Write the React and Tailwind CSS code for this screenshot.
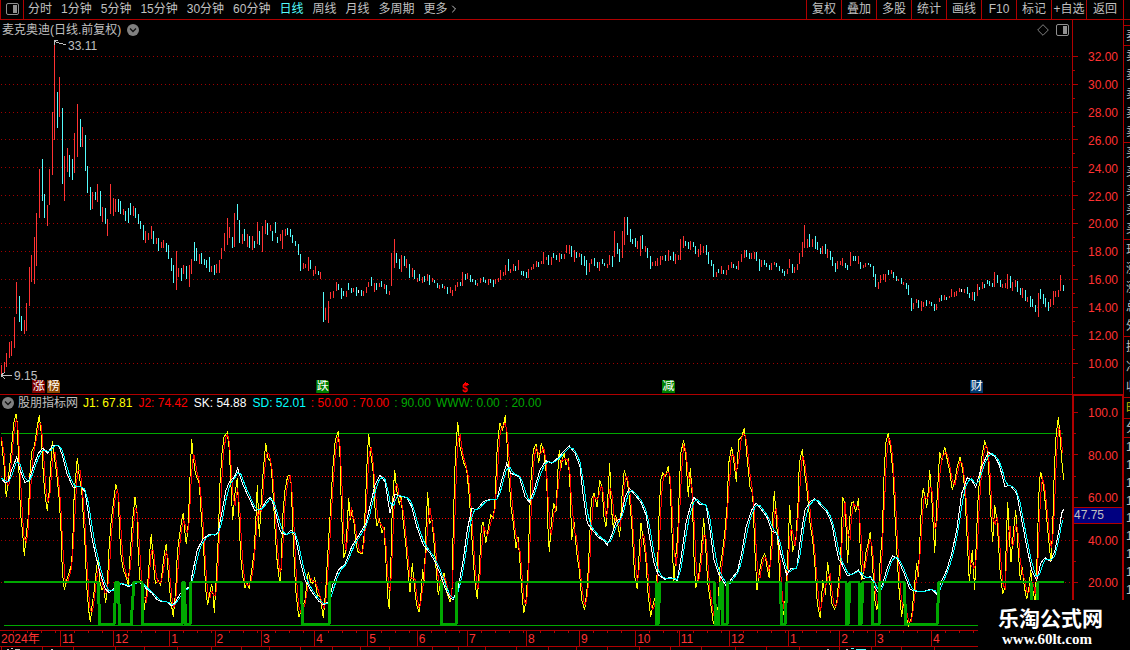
import { LuChevronRight } from "react-icons/lu";

const PERIODS = ["分时", "1分钟", "5分钟", "15分钟", "30分钟", "60分钟", "日线", "周线", "月线", "多周期", "更多"];
const TOOLS = ["复权", "叠加", "多股", "统计", "画线", "F10", "标记", "+自选"];

const PRICES = [32, 30, 28, 26, 24, 22, 20, 18, 16, 14, 12, 10];
const PRICE_LINES = [56, 84, 112, 139, 167, 195, 223, 251, 279, 307, 335, 363];
const LEVELS = ["100.0", "80.00", "60.00", "40.00", "20.00"];

// x, high, low
const UP = `1 365 375,4 362 373,6 353 367,9 342 358,11 341 356,14 317 348,16 282 314,24 320 334,26 303 331,29 267 306,31 255 282,34 237 284,36 213 266,39 169 218,47 205 226,49 169 205,52 112 175,54 42 140,59 77 117,64 156 201,67 148 172,74 133 173,77 104 157,82 127 147,92 192 209,97 184 202,102 207 222,107 219 236,110 184 214,113 198 216,115 199 212,123 209 215,133 206 216,145 231 243,148 233 240,151 226 239,156 238 244,161 242 248,163 240 248,176 251 290,178 268 277,183 265 274,189 265 287,191 259 274,199 254 264,211 266 272,216 264 273,219 260 273,221 248 259,224 233 251,227 218 245,229 227 238,234 213 247,242 234 244,247 234 247,252 236 250,257 222 244,262 226 252,265 220 234,270 225 231,280 234 241,282 230 249,285 229 236,303 263 269,305 264 268,308 257 271,313 270 276,315 266 274,320 272 279,325 308 320,328 301 323,330 292 299,333 291 298,336 282 291,346 291 297,353 288 292,363 291 296,366 287 293,368 282 287,374 283 292,379 283 287,384 284 289,389 291 295,391 253 286,394 239 268,401 255 272,406 259 268,412 268 277,417 278 282,422 277 283,427 274 281,432 278 282,439 285 289,444 286 289,450 287 293,452 290 296,455 285 291,457 282 287,462 272 286,467 273 279,477 283 286,480 278 283,488 279 285,495 279 284,498 278 282,500 270 280,503 272 276,505 265 275,510 269 273,513 264 271,518 260 270,528 269 278,531 267 270,533 264 269,536 261 267,541 261 264,543 252 264,546 257 260,551 257 265,559 253 262,564 254 259,566 245 253,569 245 254,574 250 262,579 253 257,589 263 272,591 259 264,599 262 271,607 264 268,609 255 265,614 231 257,622 231 258,624 217 245,637 241 249,640 236 256,645 246 252,652 262 266,655 261 266,657 258 266,660 256 265,662 256 260,668 250 261,675 254 264,678 255 260,680 239 260,683 236 248,690 241 250,698 249 257,700 244 255,703 246 253,716 272 277,721 266 274,726 270 275,728 265 270,731 262 268,738 261 270,741 254 262,744 250 258,751 253 259,754 252 259,761 260 267,771 263 270,774 262 265,787 269 274,789 259 268,794 267 273,797 264 270,799 253 264,802 242 257,804 225 248,807 239 248,812 239 247,822 246 254,827 249 258,837 261 269,840 261 265,842 258 266,850 252 266,858 256 264,863 265 268,865 263 267,878 282 289,880 275 283,883 274 280,885 274 282,891 270 274,898 279 281,903 282 285,913 303 309,916 299 303,921 301 311,923 302 307,929 301 304,936 304 310,939 298 302,944 295 300,949 296 298,951 289 297,954 292 297,956 291 296,959 288 292,964 289 293,972 292 300,977 284 296,982 282 289,994 272 287,1002 284 288,1005 283 288,1007 274 289,1012 282 291,1015 280 287,1022 288 298,1027 297 302,1038 293 317,1050 299 307,1053 291 305,1055 291 297,1058 290 297,1060 275 291`;
const DOWN = `19 296 322,21 316 331,42 159 201,44 194 218,57 92 128,62 108 184,69 155 177,72 159 180,80 119 147,85 135 171,87 166 193,90 187 210,95 192 200,100 191 216,105 208 224,118 199 212,120 201 214,125 211 221,128 208 223,130 203 215,135 208 218,138 214 224,140 221 229,143 225 240,153 231 244,158 238 251,166 243 252,168 245 259,171 258 271,173 265 283,181 268 281,186 266 279,194 242 261,196 248 261,201 253 264,204 259 265,206 260 268,209 257 272,214 265 275,232 237 248,237 204 220,239 220 243,244 229 241,249 236 248,254 241 248,259 231 245,267 223 235,272 231 241,275 222 233,277 237 243,287 228 235,290 229 237,292 235 243,295 241 246,298 244 255,300 254 271,310 260 269,318 271 275,323 292 322,338 284 290,341 288 299,343 291 296,348 283 290,351 288 293,356 287 296,361 290 296,371 277 286,376 283 290,381 281 287,386 285 294,396 253 263,399 259 269,404 256 266,409 264 278,414 270 279,419 274 281,424 276 282,429 275 285,434 280 283,437 283 288,442 284 288,447 287 294,460 282 286,465 274 280,470 275 282,472 279 282,475 280 285,483 277 282,485 280 283,490 279 283,493 280 287,508 259 271,515 266 271,521 271 275,523 271 276,526 272 278,538 262 267,548 255 265,553 253 258,556 255 260,561 254 259,571 246 257,576 252 258,581 254 265,584 256 266,586 260 275,594 258 266,597 262 268,602 259 264,604 263 266,612 256 267,617 243 254,619 249 262,627 217 235,630 229 242,632 239 244,635 238 247,642 235 249,647 248 258,650 256 269,665 255 261,670 256 260,673 252 261,685 241 246,688 242 249,693 242 247,695 246 254,706 245 255,708 252 264,711 260 266,713 264 277,718 269 273,723 270 274,733 264 268,736 266 269,746 250 257,749 253 259,756 252 261,759 259 271,764 260 265,766 263 267,769 265 270,776 263 267,779 266 271,782 269 273,784 271 276,792 264 273,809 234 247,815 236 249,817 242 250,820 248 254,825 244 254,830 251 260,832 257 266,835 263 272,845 263 268,847 265 270,853 256 261,855 256 261,860 262 269,868 263 265,870 264 267,873 266 277,875 274 287,888 270 275,893 272 278,896 276 281,901 278 284,906 283 289,908 285 295,911 298 311,918 300 308,926 300 306,931 302 306,934 304 311,941 295 301,946 297 300,967 287 294,969 293 298,974 292 301,979 287 290,984 284 288,987 280 284,989 281 286,992 283 287,997 275 283,1000 280 287,1010 276 288,1017 281 292,1020 288 295,1025 290 301,1030 296 307,1032 299 307,1035 305 312,1040 289 299,1043 294 304,1045 298 307,1048 302 311,1063 285 291`;
const FLAT = "358 290 293,961 289 292";

// Indicator traces, one block per 280px of width, in thirds of a pixel
const J_BLOCKS = [
  "4,142 8,190 12,225 16,290 19,322 24,275 32,200 41,100 48,72 52,100 55,190 60,330 63,385 68,430 73,498 78,440 85,380 90,250 95,185 103,170 110,120 118,76 124,130 127,200 131,270 136,320 142,363 147,310 152,230 157,152 163,200 170,250 178,330 184,440 187,545 193,600 200,570 207,550 215,520 219,430 223,300 228,250 232,203 238,260 245,300 250,380 256,480 260,590 266,660 271,697 277,640 283,600 290,530 295,505 300,575 306,600 311,590 317,640 322,590 326,490 333,400 340,340 347,282 354,310 358,400 362,490 370,540 378,560 385,585 390,500 397,400 405,322 411,370 415,500 420,570 427,600 432,660 438,620 445,560 449,490 454,432 460,520 466,580 475,572 482,585 488,530 493,490 499,462 504,540 511,620 520,682 527,600 532,490 538,440 545,390 550,368 554,420 559,462 565,400 570,260 575,148 580,200 586,250 598,280 604,380 611,480 617,600 623,645 629,610 635,582 640,620 643,670 649,560 655,440 660,280 666,190 672,140 682,127 688,180 693,290 698,390 705,310 712,265 716,360 722,500 728,560 735,595 741,575 748,597 755,540 762,490 768,380 772,285 778,440 784,330 790,240 797,160 804,205 812,215 818,290 824,400 830,500 838,570",
  "2,570 8,380 15,300 23,258 32,256 36,350 40,460 47,600 56,682 65,660 75,630 85,545 92,578 98,580 104,565 112,615 121,620 130,685 137,600 144,480 150,380 158,240 166,150 175,122 180,200 184,350 191,505 198,480 202,400 206,325 211,390 216,360 222,400 228,460 234,485 246,492 252,440 257,320 262,200 266,132 272,190 280,250 286,370 291,408 298,385 306,430 312,410 318,520 323,620 328,658 333,500 337,350 344,240 350,300 358,345 363,320 370,400 377,460 384,540 390,605 397,520 403,590 410,645 418,667 423,610 428,538 433,580 437,430 443,305 448,400 456,390 462,460 470,560 475,615 483,570 492,550 500,605 510,635 516,600 520,400 526,200 533,95 540,170 550,215 560,240 568,320 576,450 584,570 592,628 598,540 604,410 610,395 617,460 624,420 632,375 640,385 646,320 650,200 655,135 660,100 668,120 676,76 681,160 686,250 693,350 700,400 708,475 714,440 720,520 726,610 731,670 738,630 744,540 748,400 753,270 760,180 768,162 776,220 784,160 792,190 800,260 803,400 808,485 814,400 821,340 828,365 835,220 838,180",
  "2,240 8,205 13,190 18,225 25,205 30,290 35,450 42,395 50,490 58,540 65,630 74,660 82,590 88,470 94,330 102,310 111,350 119,270 126,290 132,380 138,410 143,330 149,220 154,350 160,415 166,375 172,395 179,440 185,330 193,240 201,270 208,320 215,400 224,560 232,598 238,480 243,400 250,450 257,500 264,610 272,680 280,640 287,620 293,520 297,380 302,270 308,250 317,258 325,228 331,290 336,430 341,580 347,500 353,440 358,300 362,190 371,150 378,210 385,320 391,235 397,320 402,500 407,595 416,560 424,480 431,385 437,470 443,580 452,640 460,700 467,690 474,650 480,530 487,490 494,430 501,350 506,220 515,170 522,220 529,275 536,150 545,140 553,115 560,190 570,290 578,310 584,470 591,600 598,550 605,510 614,490 621,530 628,565 634,450 643,303 650,400 656,500 663,640 671,675 678,600 684,480 689,345 698,485 708,440 714,340 718,220 727,178 734,250 742,310 750,400 758,450 765,530 772,640 781,685 788,570 796,615 803,515 808,560 815,640 824,658 830,640 837,560",
  "2,500 8,320 16,345 19,440 23,518 28,400 34,340 40,335 47,365 56,325 60,460 65,570 72,540 78,485 85,460 91,425 97,510 103,620 110,660 116,630 120,520 127,430 132,260 137,160 145,128 152,180 159,250 165,380 172,510 178,610 185,680 191,630 198,680 206,708 215,680 222,600 230,520 235,560 240,440 245,330 250,295 260,355 265,300 269,240 275,320 284,490 291,330 299,185 305,215 314,170 322,210 330,250 337,300 345,270 352,230 360,202 368,240 374,300 380,420 388,575 393,520 397,480 404,600 409,450 415,310 421,250 427,190 434,155 442,175 448,270 453,380 458,455 464,345 472,400 480,540 488,612 495,590 499,450 503,335 508,440 513,515 520,430 527,360 533,460 541,570 547,530 553,590 560,628 566,600 572,540 578,600 585,630 590,540 594,400 598,280 602,245 610,285 617,350 625,440 633,515 638,410 643,240 648,140 655,82 661,150 666,220 671,270",
];
const SK_BLOCKS = [
  "4,265 15,278 25,275 35,240 50,202 60,240 75,278 88,270 98,235 115,190 128,175 143,190 158,165 175,165 187,195 200,250 220,293 240,288 255,305 265,370 275,440 288,500 300,550 315,595 328,608 345,590 358,578 375,585 388,590 405,577 425,580 440,598 455,608 470,628 485,636 500,635 515,648 527,635 540,612 555,598 570,590 578,545 592,480 608,448 628,432 645,436 655,425 665,370 678,300 690,272 703,262 713,235 725,275 745,320 765,362 785,355 800,330 812,322 825,360 838,415",
  "5,430 20,435 33,420 45,435 60,510 75,570 95,605 115,632 130,645 145,635 160,580 175,540 195,522 215,470 240,430 258,400 272,340 285,285 300,255 315,275 330,370 345,312 362,320 380,322 395,350 410,410 430,465 450,490 465,515 480,550 495,595 510,625 520,628 535,590 548,520 562,420 575,355 590,360 610,335 630,328 650,330 665,270 680,220 692,250 718,260 735,320 748,337 762,300 780,240 797,212 815,220 838,200",
  "10,185 28,168 45,190 60,230 70,320 82,400 95,418 115,442 130,450 142,465 155,435 168,395 182,385 195,320 208,295 225,315 242,335 258,375 270,450 282,520 295,555 315,568 330,562 352,572 362,510 378,400 392,345 402,322 418,342 438,345 450,420 462,510 475,550 500,590 515,565 532,545 545,490 558,410 575,360 588,338 605,360 620,380 635,422 650,430 662,490 680,555 693,535 710,535 722,440 735,360 750,335 765,326 785,350 800,365 815,400 828,470 837,510",
  "2,515 22,558 40,550 55,540 70,565 92,560 103,590 115,608 128,580 143,530 158,497 175,510 192,550 210,598 230,605 255,603 275,597 290,613 302,580 320,540 335,490 350,420 365,310 382,263 395,270 407,292 425,230 445,187 465,200 478,225 495,290 510,285 530,310 545,390 560,470 575,540 590,572 602,520 615,503 632,515 645,480 657,420 665,370 671,357",
];

// [fall start, fall end, rise start, rise end] of every dip of the WWW line
const DIPS = [
  [98, 100, 114, 116], [118, 120, 131, 134], [142, 143, 182, 183], [184, 186, 190, 191],
  [301, 303, 329, 330], [441, 442, 456, 457], [656, 657, 658, 660], [714, 716, 718, 721],
  [722, 723, 727, 728], [780, 782, 785, 787], [846, 847, 848, 850], [859, 860, 861, 863],
  [872, 873, 879, 880], [904, 906, 937, 939], [1031, 1032, 1037, 1038],
];

const MONTHS = [
  ["2024年", 61], ["11", 53], ["12", 56], ["1", 45], ["2", 46], ["3", 53], ["4", 53], ["5", 49], ["6", 50],
  ["7", 59], ["8", 53], ["9", 56], ["10", 43], ["11", 50], ["12", 59], ["1", 51], ["2", 35], ["3", 56], ["4", 144],
];
const FOOT_TICKS = [1, 42, 73, 115, 144, 177, 211, 241, 269, 300, 332, 360, 389, 432, 458, 485, 516, 548, 576, 607, 639, 670, 701, 735, 766, 799, 839, 871, 901, 934];

const QUOTE_ROWS = [
  { rows: ["麦"], box: "h-5" },
  { rows: ["卖", "卖", "卖", "卖", "卖"], box: "h-[97px]" },
  { rows: ["买", "买", "买", "买", "买"], box: "h-[97px]" },
  { rows: ["现", "涨", "涨", "总", "外"], box: "h-[97px]" },
  { rows: ["换", "净", "收"], box: "h-[61px]" },
  { rows: ["时"], box: "h-[21px] text-[#c0c000]" },
  { rows: ["分"], box: "h-[19px]" },
  { rows: ["1", "1", "1", "1", "1", "1", "1", "1", "1"], box: "h-[162px]" },
];

function candlePath(list) {
  return list
    .split(",")
    .map((c) => {
      const [x, high, low] = c.split(" ");
      return `M${x}.5 ${high}V${low}`;
    })
    .join("");
}

function joinBlocks(blocks) {
  return blocks.flatMap((block, i) =>
    block.split(" ").map((p) => {
      const [x, y] = p.split(",").map(Number);
      return [i * 280 + x / 3, 390 + y / 3];
    })
  );
}

function valueAt(points, x) {
  if (x <= points[0][0]) return points[0][1];
  for (let i = 1; i < points.length; i++) {
    const [x1, y1] = points[i];
    if (x <= x1) {
      const [x0, y0] = points[i - 1];
      return y0 + ((y1 - y0) * (x - x0)) / (x1 - x0 || 1);
    }
  }
  return points[points.length - 1][1];
}

// two-bar average of a trace
function smooth(points, bar) {
  const out = [];
  const last = points[points.length - 1][0];
  for (let x = points[0][0]; x <= last; x += 1.25) {
    out.push([x, (valueAt(points, x) + valueAt(points, x - bar)) / 2]);
  }
  return out;
}

const toPoints = (points) => points.map(([x, y]) => `${x.toFixed(1)},${y.toFixed(1)}`).join(" ");

const J1 = joinBlocks(J_BLOCKS);
const SK = joinBlocks(SK_BLOCKS);
const J2 = smooth(J1, 2.5);
const SD = smooth(SK, 3.5);
const WWW = "M4 582" + DIPS.map(([a, b, c, d]) => `H${a}L${b} 624H${c}L${d} 582`).join("") + "H1064";
const WWW_SLOPES = DIPS.map(([a, b, c, d]) => `M${a} 582L${b} 625M${c} 625L${d} 582`).join("");

function PanelIcon() {
  return (
    <svg width="13" height="12" viewBox="0 0 13 12" fill="none" aria-hidden="true">
      <rect x="0.5" y="0.5" width="12" height="11" rx="1.5" stroke="#909090" />
      <rect x="7" y="2" width="4" height="8" fill="#909090" />
    </svg>
  );
}

function CircleChevron() {
  return (
    <svg width="12" height="12" viewBox="0 0 12 12" aria-hidden="true">
      <circle cx="6" cy="6" r="6" fill="#808080" />
      <path d="M3 4.5L6 7.5L9 4.5" fill="none" stroke="#101010" strokeWidth="1.3" />
    </svg>
  );
}

function Toolbar() {
  return (
    <header className="flex h-5 border-b border-[#b00000]">
      <button className="flex w-6 shrink-0 items-center justify-center border-x border-[#b00000] pb-0.5" aria-label="侧栏">
        <PanelIcon />
      </button>
      <nav className="flex flex-1 items-center gap-[9px] pl-1 pb-px whitespace-nowrap">
        {PERIODS.map((p) => (
          <button key={p} className={p === "日线" ? "flex items-center text-[#54fcfc]" : "flex items-center"}>
            {p}
            {p === "更多" && <LuChevronRight size={12} />}
          </button>
        ))}
      </nav>
      {TOOLS.map((t) => (
        <button key={t} className="w-[35px] border-l border-[#b00000] pb-px text-center whitespace-nowrap">
          {t}
        </button>
      ))}
      <button className="w-[37px] border-l border-[#b00000] pb-px">返回</button>
      <div className="w-[7px] border-l border-[#b00000]" />
    </header>
  );
}

function Badge({ className, children }) {
  return (
    <span
      className={`absolute top-[360px] size-[13px] overflow-hidden text-center leading-[13px] text-white [clip-path:polygon(0_0,11px_0,13px_2px,13px_13px,0_13px)] ${className}`}
    >
      {children}
    </span>
  );
}

function PriceChart() {
  return (
    <section className="relative min-w-0 flex-1">
      <div className="flex h-5 items-center pl-0.5 pr-[3px]">
        <h1>麦克奥迪(日线.前复权)</h1>
        <button className="ml-1.5" aria-label="展开">
          <CircleChevron />
        </button>
        <div className="ml-auto flex items-center gap-[7px]">
          <svg width="12" height="12" viewBox="0 0 12 12" aria-hidden="true">
            <path d="M6 0.7L11.3 6L6 11.3L0.7 6Z" fill="none" stroke="#808080" />
          </svg>
          <PanelIcon />
        </div>
      </div>
      <svg className="block h-[354px] w-full" viewBox="0 40 1072 354" preserveAspectRatio="none" shapeRendering="crispEdges" fill="none">
        {PRICE_LINES.map((y) => (
          <path key={y} d={`M1 ${y}.5H1072`} stroke="#a00000" strokeDasharray="1 3" />
        ))}
        <path d={candlePath(UP)} stroke="#ff3232" />
        <path d={candlePath(DOWN)} stroke="#54fcfc" />
        <path d={candlePath(FLAT)} stroke="#ffffff" />
        <path d="M66 45L54 41.5M54 44.5V40.5H58M12 375.5H1M1 375.5L5 372M1 375.5L5 379" stroke="#c0c0c0" />
        <path d="M465 382.5H466M464 383.5H468M463 384.5H469" stroke="#ff0000" />
      </svg>
      <span className="absolute left-[68px] top-[18px] leading-4">33.11</span>
      <span className="absolute left-[14px] top-[350px] leading-3">9.15</span>
      <Badge className="left-[3%] bg-[#800000]">涨</Badge>
      <Badge className="left-[4.4%] bg-[#8a4500]">榜</Badge>
      <Badge className="left-[29.5%] bg-[#008000]">跌</Badge>
      <span className="absolute left-[43.1%] top-[364px] text-[10px] leading-[10px] font-bold text-[#ff0000]">$</span>
      <Badge className="left-[61.75%] bg-[#008000]">减</Badge>
      <Badge className="left-[90.5%] bg-[#003a70]">财</Badge>
    </section>
  );
}

function PriceAxis() {
  return (
    <aside className="flex w-[51px] border-l border-[#b00000] text-[#ff3232]">
      <svg className="h-[374px] w-[5px]" viewBox="0 20 5 374" shapeRendering="crispEdges" stroke="#b00000">
        {PRICE_LINES.map((y) => (
          <path key={y} d={`M0 ${y}.5H5M0 ${y + 14}.5H2`} />
        ))}
      </svg>
      <ol className="mt-[29px] flex h-[323px] flex-1 flex-col justify-between pr-[5px] text-right">
        {PRICES.map((p) => (
          <li key={p} className="leading-4">{p.toFixed(2)}</li>
        ))}
      </ol>
    </aside>
  );
}

function IndicatorChart() {
  return (
    <section className="min-w-0 flex-1">
      <div className="flex h-4 items-center gap-[5px] pl-0.5 whitespace-nowrap">
        <div className="flex items-center gap-1">
          <button aria-label="指标">
            <CircleChevron />
          </button>
          <h2>股朋指标网</h2>
        </div>
        <div className="flex gap-1.5">
          <span className="text-[#ffff00]">J1: 67.81</span>
          <span className="text-[#ff0000]">J2: 74.42</span>
          <span className="text-white">SK: 54.88</span>
          <span className="text-[#00ffff]">SD: 52.01</span>
        </div>
        <span className="text-[#ff0000]">: 50.00</span>
        <span className="text-[#ff0000]">: 70.00</span>
        <span className="text-[#00a800]">: 90.00</span>
        <span className="text-[#00a800]">WWW: 0.00</span>
        <span className="text-[#00a800]">: 20.00</span>
      </div>
      <svg className="block h-[219px] w-full" viewBox="0 411 1072 219" preserveAspectRatio="none" shapeRendering="crispEdges" fill="none">
        <path d="M1 454.5H1072M1 497.5H1072M1 540.5H1072M1 582.5H1072" stroke="#a00000" strokeDasharray="1 3" />
        <path d="M1 476.5H1064M1 518.5H1064" stroke="#ff0000" strokeDasharray="1 2" />
        <path d="M1 433.5H1063M4 625.5H1063" stroke="#00a800" />
        <polyline points={toPoints(J1)} stroke="#ffff00" />
        <polyline points={toPoints(J2)} stroke="#ff0000" />
        <polyline points={toPoints(SK)} stroke="#ffffff" />
        <polyline points={toPoints(SD)} stroke="#00ffff" />
        <path d={WWW} stroke="#00a800" strokeWidth="2" />
        <path d={WWW_SLOPES} stroke="#00a800" strokeWidth="3" />
      </svg>
    </section>
  );
}

function IndicatorAxis() {
  return (
    <aside className="relative flex w-[51px] border-r border-l-2 border-t border-[#b00000] text-[#ff3232]">
      <svg className="h-[234px] w-1" viewBox="0 396 4 234" shapeRendering="crispEdges" stroke="#b00000">
        <path d="M0 412.5H4M0 433.5H2M0 454.5H4M0 476.5H2M0 497.5H4M0 540.5H4M0 561.5H2M0 582.5H4" />
      </svg>
      <ol className="mt-[9px] flex h-[186px] flex-1 flex-col justify-between pr-1 text-right">
        {LEVELS.map((l) => (
          <li key={l} className="leading-4">{l}</li>
        ))}
      </ol>
      <output className="absolute inset-x-0 top-[111px] border-y border-[#b00000] bg-[#000080] leading-[15px] text-[#c0c0c0]">
        47.75
      </output>
    </aside>
  );
}

function DateBar() {
  return (
    <footer>
      <ol className="mr-[51px] flex h-[17px] border-y border-[#b00000] text-[#ff3232]">
        {MONTHS.map(([label, days], i) => (
          <li
            key={i}
            className={`relative basis-0 overflow-hidden whitespace-nowrap pl-px leading-4 ${i ? "border-l border-[#b00000]" : ""}`}
            style={{ flexGrow: days }}
          >
            {label}
            <svg className="absolute left-0 top-0 h-0.5 w-full" shapeRendering="crispEdges">
              <path d="M13.5 0V2M27.5 0V2M41.5 0V2M55.5 0V2" stroke="#b00000" />
            </svg>
          </li>
        ))}
      </ol>
      <svg className="block h-[3px] w-full" viewBox="0 0 1123 3" preserveAspectRatio="none" shapeRendering="crispEdges">
        <path d={FOOT_TICKS.map((x) => `M${x}.5 0V3`).join("")} stroke="#b00000" />
        <path d="M7 2.5H9M11 1.5H13M15 2.5H20M51 2.5H53M827 2.5H829M846 2.5H848" stroke="#c0c0c0" />
        <path d="M851 1.5H854M856 2.5H866" stroke="#54fcfc" />
      </svg>
    </footer>
  );
}

function QuoteStrip() {
  return (
    <aside className="w-[7px] overflow-hidden border-l border-[#b00000] pt-[5px]">
      {QUOTE_ROWS.map(({ rows, box }, i) => (
        <ul key={i} className={`flex flex-col justify-around border-t border-[#b00000] pl-0.5 ${box}`}>
          {rows.map((r, j) => (
            <li key={j} className="leading-4">{r}</li>
          ))}
        </ul>
      ))}
    </aside>
  );
}

function App() {
  return (
    <div className="relative min-h-screen overflow-hidden bg-black font-['Liberation_Sans','Noto_Sans_CJK_SC',sans-serif] text-xs text-[#c0c0c0]">
      <Toolbar />
      <div className="flex">
        <main className="min-w-0 flex-1">
          <div className="flex border-b border-[#b00000]">
            <PriceChart />
            <PriceAxis />
          </div>
          <div className="flex">
            <IndicatorChart />
            <IndicatorAxis />
          </div>
          <DateBar />
        </main>
        <QuoteStrip />
      </div>

      {/* Site mark over the bottom right corner */}
      <div className="absolute bottom-0 right-0 flex h-[50px] w-[152px] flex-col bg-black pl-5 pt-[7px] text-white">
        <strong className="text-[21px] leading-6 font-bold">乐淘公式网</strong>
        <a href="#" className="pl-1 font-['Liberation_Serif',serif] text-[15px] leading-4 font-bold">
          www.60lt.com
        </a>
      </div>
    </div>
  );
}

export default App;
